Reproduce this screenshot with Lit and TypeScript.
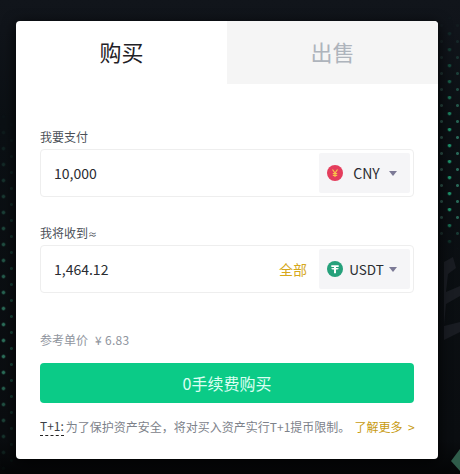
import { LitElement, html, css } from "lit";
import { customElement } from "lit/decorators.js";

@customElement("app-root")
export class AppRoot extends LitElement {
  static styles = css`
    :host {
      display: block;
      position: relative;
      width: 460px;
      height: 474px;
      overflow: hidden;
      font-family: "Noto Sans CJK SC", "Noto Sans", sans-serif;
      background: linear-gradient(180deg, #11151b 0, #10141a 30px, #0b1014 120px, #0a0d10 440px, #040506 474px);
    }
    .dots {
      position: absolute;
      top: 0;
      height: 474px;
    }
    .dots.left {
      left: 0;
      width: 16px;
      background-image:
        radial-gradient(circle at 3.5px 4.5px, rgba(70, 190, 150, 0.55) 0 1px, rgba(70, 190, 150, 0.18) 2px, transparent 2.5px),
        radial-gradient(circle at 11.5px 12.5px, rgba(40, 150, 115, 0.4) 0 1px, transparent 2px);
      background-size: 16px 16px;
      -webkit-mask-image: linear-gradient(180deg, transparent 110px, rgba(0, 0, 0, 0.4) 190px, #000 320px, #000 370px, rgba(0, 0, 0, 0.35) 440px, transparent 474px);
      mask-image: linear-gradient(180deg, transparent 110px, rgba(0, 0, 0, 0.4) 190px, #000 320px, #000 370px, rgba(0, 0, 0, 0.35) 440px, transparent 474px);
    }
    .dots.right {
      right: 0;
      width: 24px;
      background-image:
        radial-gradient(circle at 13.5px 1.5px, rgba(40, 210, 150, 0.65) 0 1px, rgba(40, 210, 150, 0.2) 2px, transparent 2.5px),
        radial-gradient(circle at 5.5px 9.5px, rgba(90, 170, 145, 0.4) 0 1px, transparent 2px),
        radial-gradient(circle at 21.5px 9.5px, rgba(70, 190, 155, 0.5) 0 1px, transparent 2px);
      background-size: 24px 16px;
      -webkit-mask-image: linear-gradient(180deg, transparent 15px, rgba(0, 0, 0, 0.3) 50px, #000 130px, #000 215px, transparent 250px);
      mask-image: linear-gradient(180deg, transparent 15px, rgba(0, 0, 0, 0.3) 50px, #000 130px, #000 215px, transparent 250px);
    }
    .shape {
      position: absolute;
      right: 0;
      top: 0;
      width: 22px;
      height: 474px;
    }
    .card {
      position: relative;
      box-sizing: border-box;
      width: 422px;
      height: 438px;
      margin: 21px 0 0 16px;
      background: #fff;
      border-radius: 4px;
      overflow: hidden;
      box-shadow: 0 3px 14px rgba(0, 0, 0, 0.85);
    }
    .tabs {
      display: grid;
      grid-template-columns: 211px 211px;
      height: 63px;
    }
    .tab {
      display: flex;
      align-items: center;
      justify-content: center;
      font-size: 22px;
      line-height: 1;
      color: #1f2126;
      padding-bottom: 4px;
      box-sizing: border-box;
    }
    .tab.off {
      background: #f5f5f5;
      color: #aeb4bc;
    }
    .body {
      padding: 44px 24px 0;
    }
    .label {
      font-size: 12px;
      line-height: 18px;
      height: 18px;
      color: #4b5058;
      margin-bottom: 3px;
    }
    .approx {
      font-size: 9px;
    }
    .field {
      box-sizing: border-box;
      height: 48px;
      border: 1px solid #eeeeee;
      border-radius: 4px;
      display: flex;
      align-items: center;
      padding: 0 3px 0 13px;
    }
    .field.first {
      margin-bottom: 27px;
    }
    .value {
      flex: 1;
      font-size: 14px;
      color: #2a2c31;
    }
    .all {
      font-size: 14px;
      color: #d6a81c;
      margin-right: 12px;
    }
    .select {
      width: 91px;
      height: 40px;
      background: #f5f5f7;
      border-radius: 2px;
      display: flex;
      align-items: center;
      font-size: 14px;
      color: #2a2c31;
      padding-left: 8px;
      box-sizing: border-box;
    }
    .select svg.coin {
      width: 16px;
      height: 16px;
      flex: none;
    }
    .code {
      flex: 1;
      text-align: center;
      padding-left: 4px;
    }
    .code.usdt {
      font-size: 13.5px;
    }
    .caret {
      width: 0;
      height: 0;
      border-left: 4px solid transparent;
      border-right: 4px solid transparent;
      border-top: 5px solid #7c7a96;
      margin-right: 13px;
      margin-left: 3px;
    }
    .rate {
      font-size: 12px;
      line-height: 18px;
      color: #8f959e;
      margin-top: 38px;
      display: flex;
      gap: 7px;
    }
    .price {
      letter-spacing: 0.3px;
    }
    .buy {
      height: 40px;
      margin-top: 14px;
      background: #0bcb87;
      border-radius: 4px;
      color: #dcfff2;
      font-size: 16px;
      display: flex;
      align-items: center;
      justify-content: center;
    }
    .note {
      margin-top: 15px;
      font-size: 12px;
      line-height: 18px;
      color: #7d828a;
      white-space: nowrap;
      display: flex;
    }
    .t1 {
      color: #3a3e45;
      border-bottom: 1px dashed #222;
      line-height: 16px;
      height: 17px;
      margin-right: 2px;
    }
    .more {
      color: #c79a10;
      margin-left: 4px;
      word-spacing: 3px;
    }
  `;

  render() {
    return html`
      <div class="dots left"></div>
      <div class="dots right"></div>
      <svg class="shape" viewBox="0 0 22 474">
        <path d="M6 262 15 257 18 268 10 274 8 292 22 286V296L8 304 6 326 22 322V332L6 340Z" fill="#191c22"></path>
        <path d="M22 449 13 461 22 471Z" fill="#2f5c4a"></path>
      </svg>
      <div class="card">
        <div class="tabs">
          <div class="tab">购买</div>
          <div class="tab off">出售</div>
        </div>
        <div class="body">
          <div class="label">我要支付</div>
          <div class="field first">
            <div class="value">10,000</div>
            <div class="select">
              <svg class="coin" viewBox="0 0 16 16">
                <circle cx="8" cy="8" r="8" fill="#e43d5c"></circle>
                <path d="M5.500 4.500 8 8l2.500-3.500M8 8v4M5.800 8.500h4.400M5.800 10.300h4.400" fill="none" stroke="#f8c44a" stroke-width="1.200"></path>
              </svg>
              <span class="code">CNY</span><span class="caret"></span>
            </div>
          </div>
          <div class="label">我将收到<span class="approx">≈</span></div>
          <div class="field">
            <div class="value">1,464.12</div>
            <div class="all">全部</div>
            <div class="select">
              <svg class="coin" viewBox="0 0 16 16">
                <circle cx="8" cy="8" r="8" fill="#26a17b"></circle>
                <path d="M4.300 4.300h7.400v1.600H9v1.100c1.600.1 2.800.4 2.800.8s-1.200.7-2.800.8v3.600H7V8.600c-1.600-.1-2.800-.4-2.800-.8s1.200-.7 2.800-.8V5.900H4.300z" fill="#fff"></path>
              </svg>
              <span class="code usdt">USDT</span><span class="caret"></span>
            </div>
          </div>
          <div class="rate"><span>参考单价</span><span class="price">¥ 6.83</span></div>
          <div class="buy">0手续费购买</div>
          <div class="note">
            <span class="t1">T+1:</span><span>为了保护资产安全，将对买入资产实行T+1提币限制。</span><span class="more">了解更多 &gt;</span>
          </div>
        </div>
      </div>
    `;
  }
}
